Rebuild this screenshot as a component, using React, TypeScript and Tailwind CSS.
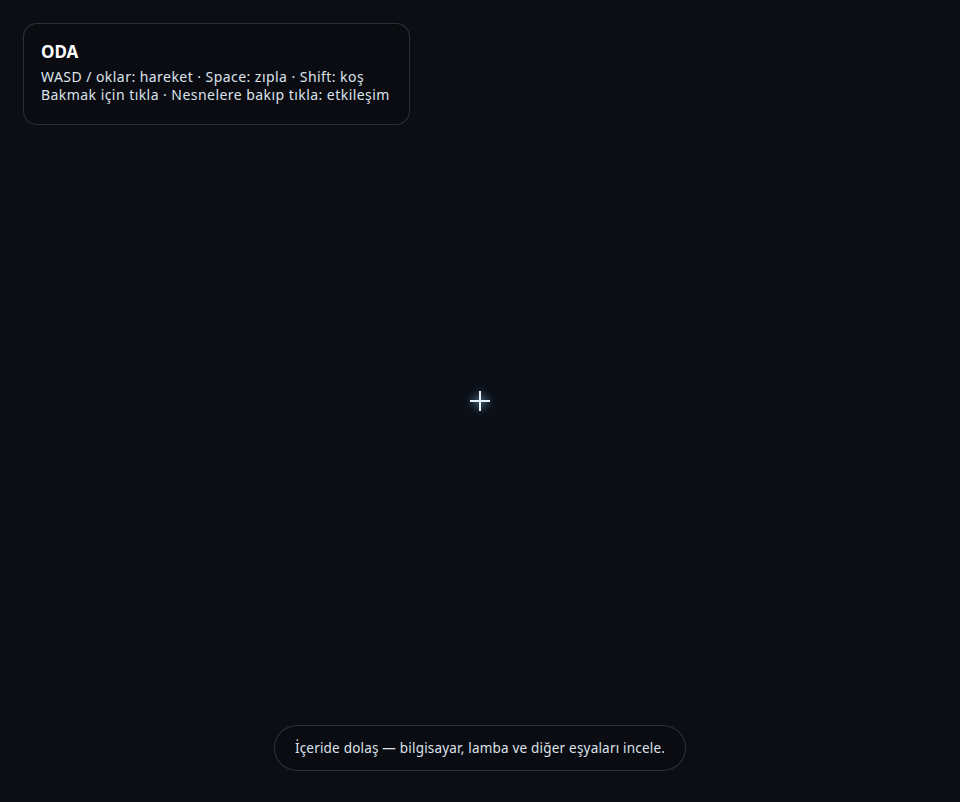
import React from 'react';

const App = () => {
  return (
    <div className="relative flex h-[802px] w-[960px] flex-col justify-between overflow-hidden bg-[#0b0e15] p-[23px] pb-[31px] text-white" style={{ fontFamily: '"Noto Sans", "Open Sans", sans-serif' }}>
      {/* HUD */}
      <div className="w-[387px] rounded-[14px] border border-white/15 bg-[#0a0c12]/80 px-[17px] pb-[20px] pt-[14px]">
        <h1 className="text-[17px] font-bold leading-[28px]">ODA</h1>
        <p className="mt-[2px] text-[14px] leading-[18px] tracking-[0.45px] text-[#dde3ec]">
          WASD / oklar: hareket · Space: zıpla · Shift: koş
          <br />
          Bakmak için tıkla · Nesnelere bakıp tıkla: etkileşim
        </p>
      </div>

      {/* crosshair */}
      <div className="pointer-events-none absolute inset-0 flex items-center justify-center">
        <svg width="28" height="28" viewBox="0 0 28 28" className="drop-shadow-[0_0_4px_rgba(140,200,255,0.9)]">
          <path d="M4 14H24M14 4V24" stroke="#e6f0fa" strokeWidth="2" />
        </svg>
      </div>

      <div className="flex justify-center">
        <div className="rounded-full border border-white/15 bg-[#0a0c12]/80 px-[20px] py-[13px] text-[13.5px] leading-[18px] tracking-[0.2px] text-[#dde3ec]">
          İçeride dolaş — bilgisayar, lamba ve diğer eşyaları incele.
        </div>
      </div>
    </div>
  );
};

export default App;
